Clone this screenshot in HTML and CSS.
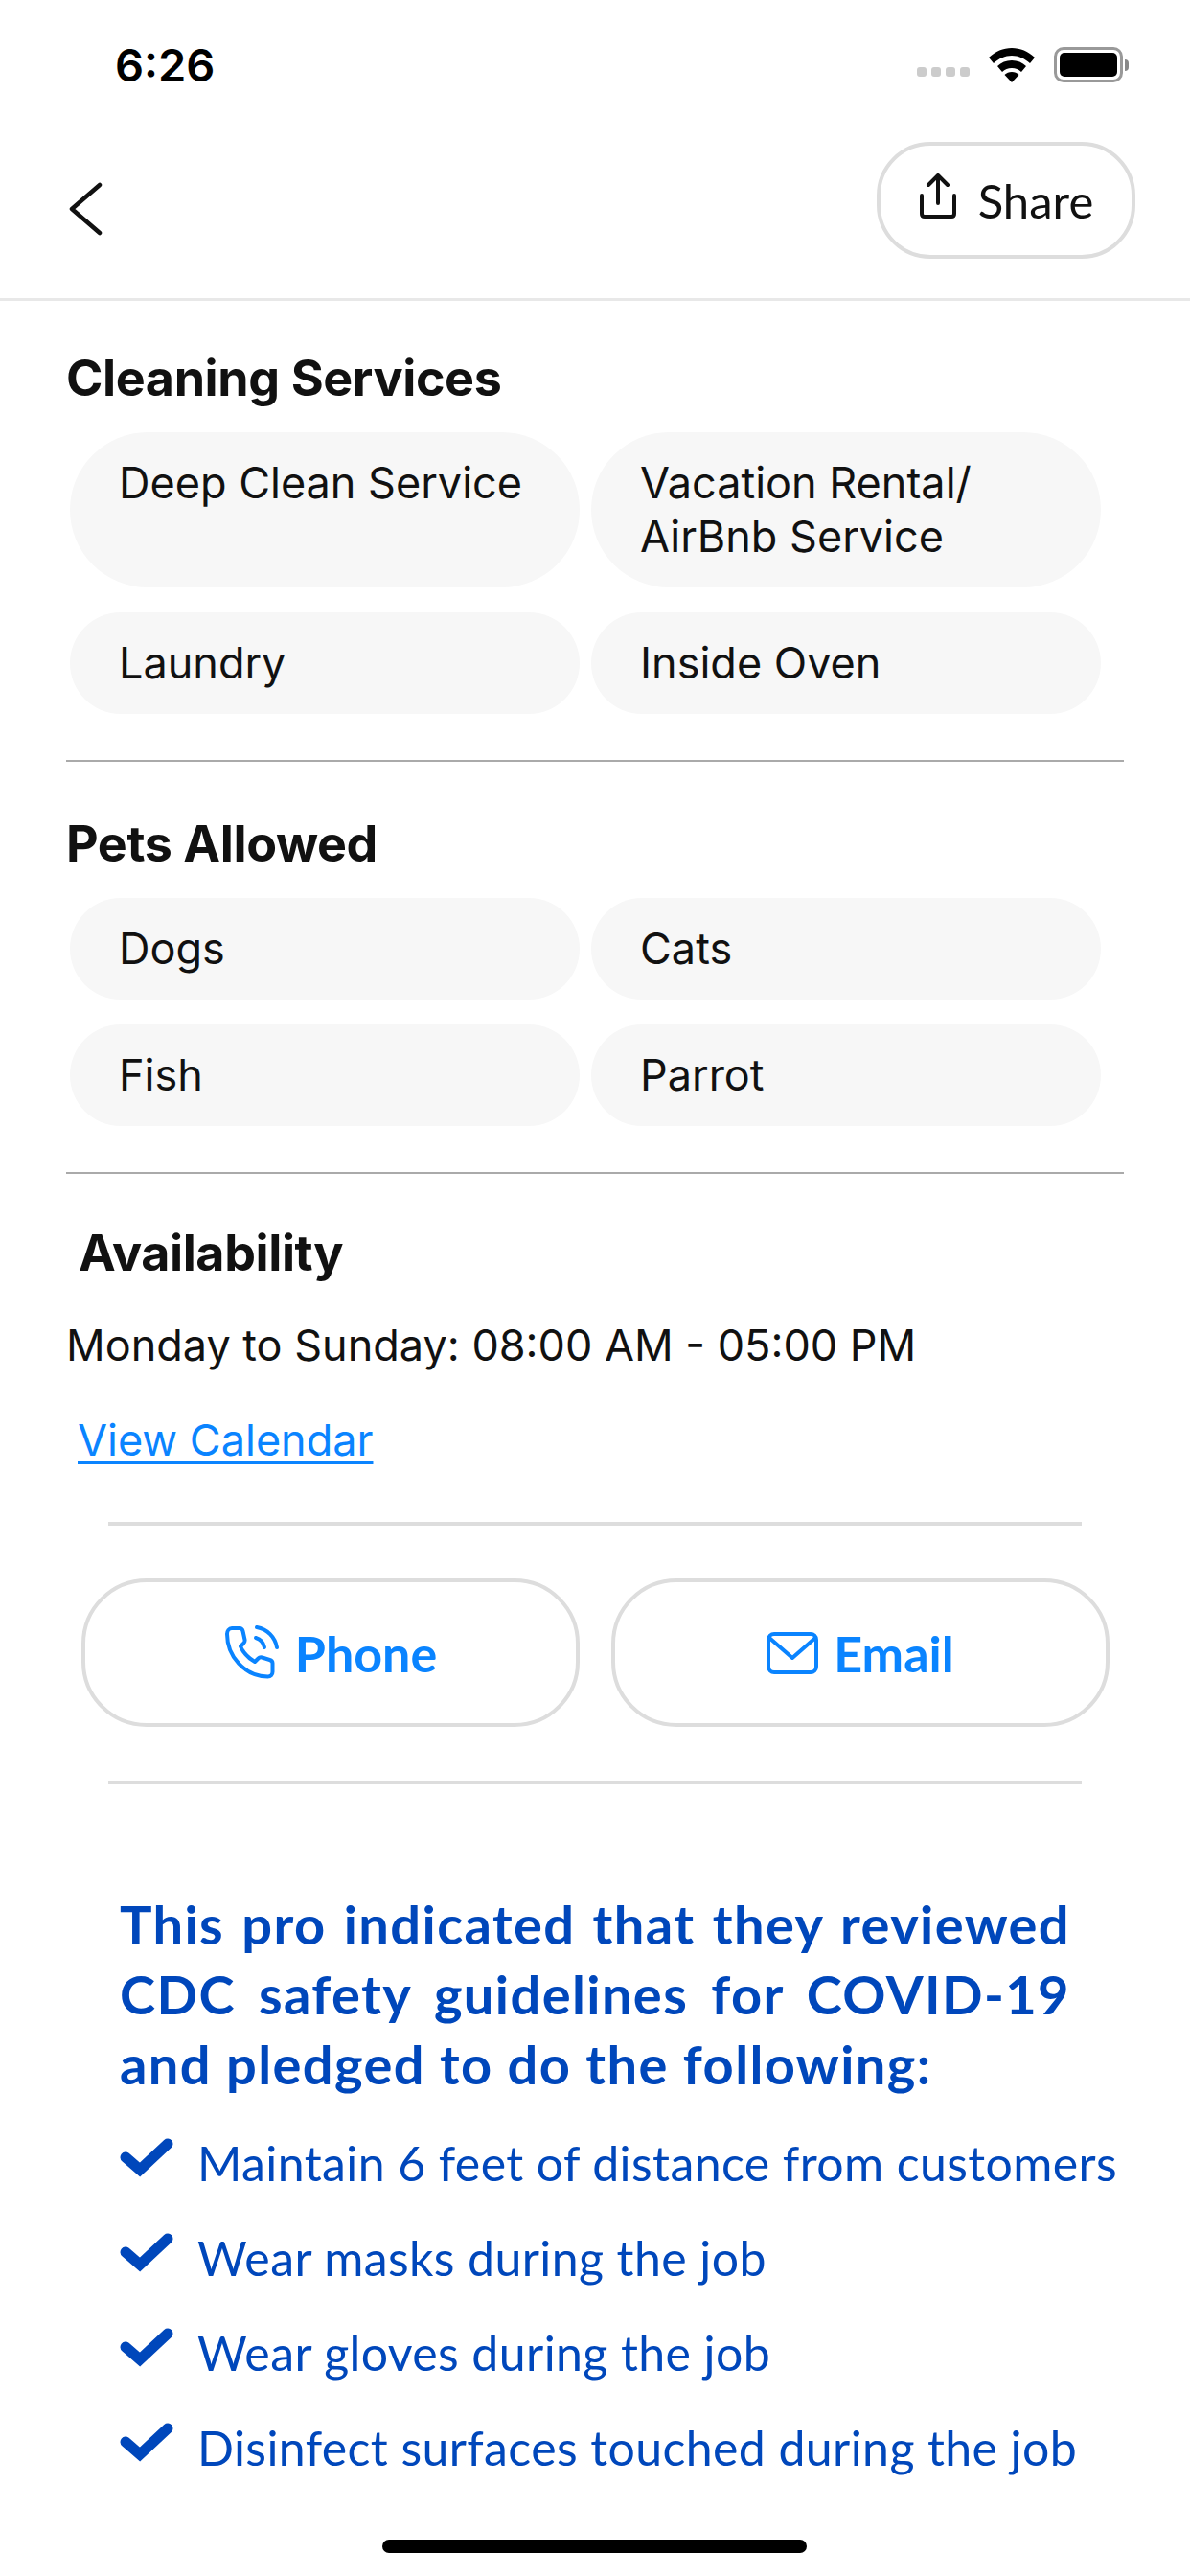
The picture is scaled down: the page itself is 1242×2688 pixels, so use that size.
FILE: index.html
```html
<!DOCTYPE html>
<html lang="en">
<head>
  <meta charset="UTF-8">
  <meta name="viewport" content="width=device-width, initial-scale=1.0">
  <title>Pro Details</title>
  <link rel="stylesheet" href="styles.css">
</head>
<body>
  <div class="status">
    <span class="time">6:26</span>
    <div class="status-icons">
      <span class="dots"><i></i><i></i><i></i><i></i></span>
      <svg class="wifi" width="48" height="36" viewBox="0 0 48 36">
        <path d="M24 0C15 0 7 3.500 0 10l5 6c5.500-5 12-8 19-8s13.500 3 19 8l5-6C41 3.500 33 0 24 0z" fill="#000"/>
        <path d="M24 13c-6 0-11 2.200-15 6l5 6c2.800-2.500 6-4 10-4s7.200 1.500 10 4l5-6c-4-3.800-9-6-15-6z" fill="#000"/>
        <path d="M24 25c-3 0-5.500 1-7.500 3L24 36l7.500-8c-2-2-4.500-3-7.500-3z" fill="#000"/>
      </svg>
      <span class="battery"><i></i></span>
      <span class="battery-tip"></span>
    </div>
  </div>

  <header class="topbar">
    <svg class="back" width="40" height="56" viewBox="0 0 40 56">
      <path d="M35 3L6 28L35 53" fill="none" stroke="#111" stroke-width="4.500" stroke-linecap="round" stroke-linejoin="round"/>
    </svg>
    <a class="share">
      <svg width="40" height="48" viewBox="0 0 40 48">
        <path d="M20 31V3M10 12l10-10 10 10" fill="none" stroke="#111" stroke-width="4" stroke-linecap="round" stroke-linejoin="round"/>
        <path d="M3 23v19c0 2 1 3 3 3h28c2 0 3-1 3-3V23" fill="none" stroke="#111" stroke-width="4" stroke-linecap="round"/>
      </svg>
      <span>Share</span>
    </a>
  </header>

  <section class="section">
    <h2 class="heading">Cleaning Services</h2>
    <div class="chips">
      <div class="chip">Deep Clean Service</div>
      <div class="chip">Vacation Rental/<br>AirBnb Service</div>
      <div class="chip">Laundry</div>
      <div class="chip">Inside Oven</div>
    </div>
  </section>

  <section class="section">
    <h2 class="heading">Pets Allowed</h2>
    <div class="chips">
      <div class="chip">Dogs</div>
      <div class="chip">Cats</div>
      <div class="chip">Fish</div>
      <div class="chip">Parrot</div>
    </div>
  </section>

  <section class="avail">
    <h2 class="heading indent">Availability</h2>
    <p class="hours">Monday to Sunday: 08:00 AM - 05:00 PM</p>
    <a class="calendar">View Calendar</a>
  </section>

  <div class="contact">
    <a class="btn">
      <svg width="58" height="58" viewBox="0 0 58 58" fill="none" stroke="#0a84ff" stroke-width="4" stroke-linecap="round" stroke-linejoin="round">
        <path d="M8 3h8c2 0 3 1 3.500 3l2 9c.4 2-.4 3-1.500 4l-3 3c3 7 8 12 15 16l3.500-3.500c1.200-1.200 2.500-1.500 4-1l8 2.500c2 .6 3 1.500 3 3.500v9c0 3-2 5-5 5C21 53 3 32 3 9c0-3 2-6 5-6z"/>
        <path d="M33 13c5 1.500 8 5 9 10"/>
        <path d="M34 2c11 2 19 10 21 21"/>
      </svg>
      <span>Phone</span>
    </a>
    <a class="btn">
      <svg width="54" height="44" viewBox="0 0 54 44" fill="none" stroke="#0a84ff" stroke-width="4" stroke-linecap="round" stroke-linejoin="round">
        <rect x="2" y="2" width="50" height="40" rx="6"/>
        <path d="M3 6l24 21L51 6"/>
      </svg>
      <span>Email</span>
    </a>
  </div>

  <section class="covid">
    <h3 class="pledge">This pro indicated that they reviewed CDC safety guidelines for COVID-19 and pledged to do the following:</h3>
    <ul class="checks">
      <li><svg class="tick" width="56" height="42" viewBox="0 0 56 42"><path d="M6 20l15 13L50 6" fill="none" stroke="#0047bb" stroke-width="11" stroke-linecap="round"/></svg>Maintain 6 feet of distance from customers</li>
      <li><svg class="tick" width="56" height="42" viewBox="0 0 56 42"><path d="M6 20l15 13L50 6" fill="none" stroke="#0047bb" stroke-width="11" stroke-linecap="round"/></svg>Wear masks during the job</li>
      <li><svg class="tick" width="56" height="42" viewBox="0 0 56 42"><path d="M6 20l15 13L50 6" fill="none" stroke="#0047bb" stroke-width="11" stroke-linecap="round"/></svg>Wear gloves during the job</li>
      <li><svg class="tick" width="56" height="42" viewBox="0 0 56 42"><path d="M6 20l15 13L50 6" fill="none" stroke="#0047bb" stroke-width="11" stroke-linecap="round"/></svg>Disinfect surfaces touched during the job</li>
    </ul>
  </section>

  <div class="home-bar"></div>
</body>
</html>
```

FILE: styles.css
```css
:root {
  --ink: #111111;
  --line: #dddddd;
  --blue: #0a84ff;
  --navy: #0047bb;
}

html, body {
  height: 2688px;
  overflow: hidden;
}

body {
  background: #ffffff;
  margin: 0;
  padding: 0;
  box-sizing: border-box;
  font-family: Inter, "Liberation Sans", sans-serif;
  color: var(--ink);
}

.status {
  height: 136px;
  display: flex;
  align-items: flex-start;
  justify-content: space-between;
  padding: 0 64px 0 120px;
  box-sizing: border-box;
}

.time {
  margin-top: 38px;
  font-size: 47px;
  line-height: 60px;
  font-weight: 600;
  color: #000;
}

.status-icons {
  display: flex;
  align-items: center;
  margin-top: 49px;
}

.dots {
  display: flex;
  gap: 5px;
  margin-top: 14px;
  margin-right: 20px;
}

.dots i {
  width: 10px;
  height: 10px;
  border-radius: 3px;
  background: #cccccc;
}

.wifi {
  margin-right: 20px;
}

.battery {
  width: 72px;
  height: 37px;
  box-sizing: border-box;
  border: 3px solid #999;
  border-radius: 10px;
  padding: 3px;
  display: flex;
}

.battery i {
  flex: 1;
  background: #000;
  border-radius: 5px;
}

.battery-tip {
  width: 4px;
  height: 12px;
  margin-left: 2px;
  background: #888;
  border-radius: 0 4px 4px 0;
}

.topbar {
  height: 178px;
  padding: 12px 57px 0 69px;
  box-sizing: border-box;
  display: flex;
  align-items: flex-start;
  justify-content: space-between;
  border-bottom: 3px solid #e8e8e8;
}

.back {
  margin-top: 42px;
}

.share {
  width: 270px;
  height: 122px;
  box-sizing: border-box;
  border: 4px solid var(--line);
  border-radius: 56px;
  display: flex;
  align-items: center;
  justify-content: center;
  gap: 22px;
  font-family: Lato, sans-serif;
  font-size: 49px;
}

.share svg {
  margin-top: -8px;
}

.section {
  margin: 0 69px;
  padding: 49px 0 48px;
  border-bottom: 2px solid #aaaaaa;
  box-sizing: border-box;
}

.section + .section {
  padding-top: 54px;
}

.heading {
  margin: 0;
  font-size: 52px;
  line-height: 64px;
  font-weight: 700;
  letter-spacing: -0.4px;
}

.indent {
  margin-left: 13px;
}

.chips {
  display: grid;
  grid-template-columns: 532px 532px;
  column-gap: 12px;
  row-gap: 26px;
  margin: 24px 0 0 4px;
}

.chip {
  background: #f7f7f7;
  border-radius: 81px;
  padding: 25px 30px 25px 51px;
  font-size: 45px;
  line-height: 56px;
}

.avail {
  margin: 0 69px;
  padding-top: 51px;
}

.hours {
  margin: 34px 0 0;
  font-size: 45px;
  line-height: 60px;
}

.calendar {
  display: block;
  margin: 39px 0 0 12px;
  font-size: 45px;
  line-height: 60px;
  color: var(--blue);
  text-decoration: underline;
  text-decoration-thickness: 3px;
  text-underline-offset: 6px;
}

.contact {
  margin: 55px 113px 0;
  border-top: 4px solid var(--line);
  border-bottom: 4px solid var(--line);
  padding: 55px 0 56px;
  display: flex;
}

.btn {
  flex: none;
  width: 520px;
  height: 155px;
  box-sizing: border-box;
  border: 4px solid var(--line);
  border-radius: 68px;
  display: flex;
  align-items: center;
  justify-content: center;
  gap: 16px;
  margin-left: -28px;
  color: var(--blue);
  font-family: Lato, sans-serif;
  font-size: 52px;
  font-weight: 700;
}

.btn + .btn {
  margin-left: 33px;
}

.covid {
  margin: 0 65px 0 125px;
  padding-top: 109px;
}

.pledge {
  margin: 0;
  width: 992px;
  font-family: Lato, sans-serif;
  font-size: 56px;
  line-height: 73px;
  font-weight: 700;
  letter-spacing: 1.4px;
  color: var(--navy);
  text-align: justify;
}

.checks {
  list-style: none;
  margin: 32px 0 0;
  padding: 0;
  color: var(--navy);
  font-family: Lato, sans-serif;
  font-size: 50px;
  letter-spacing: 0.4px;
  line-height: 70px;
  white-space: nowrap;
}

.checks li {
  height: 99px;
  display: flex;
  align-items: flex-start;
}

.tick {
  flex: none;
  margin: 9px 25px 0 0;
}

.home-bar {
  position: absolute;
  left: 399px;
  top: 2650px;
  width: 443px;
  height: 14px;
  background: #000;
  border-radius: 7px;
}
```
